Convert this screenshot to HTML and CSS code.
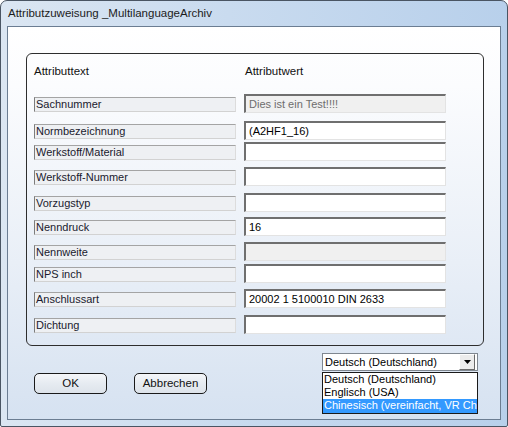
FILE: index.html
```html
<!DOCTYPE html>
<html>
<head>
<meta charset="utf-8">
<link rel="stylesheet" href="styles.css">
</head>
<body>
<div class="window">
  <div class="titlebar">Attributzuweisung _MultilanguageArchiv</div>
  <div class="client">
    <div class="group">
      <div class="head"><span>Attributtext</span><span class="head-val">Attributwert</span></div>
      <div class="grid">
        <div class="lbl">Sachnummer</div><div class="inp disabled">Dies ist ein Test!!!!</div>
        <div class="lbl">Normbezeichnung</div><div class="inp">(A2HF1_16)</div>
        <div class="lbl">Werkstoff/Material</div><div class="inp"></div>
        <div class="lbl">Werkstoff-Nummer</div><div class="inp"></div>
        <div class="lbl">Vorzugstyp</div><div class="inp"></div>
        <div class="lbl">Nenndruck</div><div class="inp">16</div>
        <div class="lbl">Nennweite</div><div class="inp disabled"></div>
        <div class="lbl">NPS inch</div><div class="inp"></div>
        <div class="lbl">Anschlussart</div><div class="inp">20002 1 5100010 DIN 2633</div>
        <div class="lbl">Dichtung</div><div class="inp"></div>
      </div>
    </div>
    <div class="footer">
      <div class="buttons">
        <div class="btn">OK</div>
        <div class="btn">Abbrechen</div>
      </div>
      <div class="combo">
        <div class="combo-box">
          <span class="combo-text">Deutsch (Deutschland)</span>
          <span class="combo-btn"><svg width="7" height="4" viewBox="0 0 7 4"><path d="M0 0H7L3.5 4Z" fill="#000"/></svg></span>
        </div>
        <div class="list">
          <div class="item">Deutsch (Deutschland)</div>
          <div class="item">Englisch (USA)</div>
          <div class="item sel">Chinesisch (vereinfacht, VR China)</div>
        </div>
      </div>
    </div>
  </div>
</div>
</body>
</html>
```
FILE: styles.css
```css
html, body {
  margin: 0;
  padding: 0;
  background: #ffffff;
}
body {
  width: 508px;
  height: 427px;
  overflow: hidden;
  font-family: "Liberation Sans", Arial, sans-serif;
}
.window {
  box-sizing: border-box;
  width: 508px;
  height: 427px;
  border: 1px solid #4a5563;
  border-radius: 7px 7px 2px 2px;
  padding: 0 6px 6px 6px;
  background: linear-gradient(to right, #dbe6f2 0%, #c9dbef 45%, #b8d0eb 100%);
  display: flex;
  flex-direction: column;
}
.titlebar {
  height: 25px;
  line-height: 25px;
  padding-left: 1px;
  font-size: 11.5px;
  color: #1c1c1c;
  white-space: nowrap;
}
.client {
  box-sizing: border-box;
  height: 394px;
  border: 1px solid #6b7d92;
  background: linear-gradient(to bottom, #ffffff 0%, #fbfcfe 15%, #e9eff7 60%, #d6e2f1 100%);
  display: flex;
  flex-direction: column;
}
.group {
  margin: 26px 16px 0 18px;
  height: 293px;
  box-sizing: border-box;
  border: 1px solid #2e2e2e;
  border-radius: 6px;
  padding: 10px 0 0 7px;
}
.head {
  display: grid;
  grid-template-columns: 202px 202px;
  column-gap: 8px;
  height: 14px;
  line-height: 14px;
  font-size: 11.5px;
  color: #111;
}
.head-val {
  padding-left: 1px;
}
.grid {
  margin-top: 16px;
  display: grid;
  grid-template-columns: 202px 202px;
  grid-template-rows: 27px 21px 25px 26px 24px 25px 22px 25px 26px 19px;
  column-gap: 8px;
  align-items: start;
  font-size: 11px;
}
.lbl {
  box-sizing: border-box;
  height: 15px;
  margin-top: 3px;
  line-height: 13px;
  padding-left: 1px;
  border-top: 1px solid #a4a4a4;
  border-left: 1px solid #7c7c7c;
  border-right: 1px solid #dcdcdc;
  border-bottom: 1px solid #d2d2d2;
  background: #eef0f3;
  color: #1a1a2e;
  white-space: nowrap;
  overflow: hidden;
}
.inp {
  box-sizing: border-box;
  height: 19px;
  line-height: 16px;
  padding-left: 3px;
  border-top: 2px solid #6f6f6f;
  border-left: 2px solid #6f6f6f;
  border-right: 1px solid #e3e3e3;
  border-bottom: 1px solid #e3e3e3;
  background: #ffffff;
  color: #000;
  white-space: nowrap;
  overflow: hidden;
}
.inp.disabled {
  background: #f0f0f0;
  color: #6d6d6d;
}
.footer {
  display: flex;
  justify-content: space-between;
  align-items: flex-start;
  margin: 7px 22px 0 26px;
}
.buttons {
  display: flex;
  gap: 27px;
  padding-top: 20px;
}
.btn {
  box-sizing: border-box;
  width: 73px;
  height: 21px;
  border: 1px solid #1a1a1a;
  border-radius: 5px;
  background: linear-gradient(to bottom, #f4f6f9 0%, #e6ebf1 50%, #dde3ea 100%);
  font-size: 11.5px;
  line-height: 19px;
  text-align: center;
  color: #111;
}
.combo {
  position: relative;
  width: 156px;
}
.combo-box {
  box-sizing: border-box;
  height: 18px;
  border: 1px solid #7f8790;
  background: #ffffff;
  display: flex;
  align-items: center;
  font-size: 11px;
}
.combo-text {
  flex: 1;
  padding-left: 2px;
  line-height: 16px;
  white-space: nowrap;
  overflow: hidden;
}
.combo-btn {
  box-sizing: border-box;
  width: 16px;
  height: 16px;
  margin-right: 2px;
  border-top: 1px solid #ffffff;
  border-left: 1px solid #ffffff;
  border-right: 1px solid #6a6a6a;
  border-bottom: 1px solid #6a6a6a;
  background: #ececec;
  display: flex;
  align-items: center;
  justify-content: center;
}
.list {
  position: absolute;
  left: 0;
  top: 19px;
  box-sizing: border-box;
  width: 156px;
  height: 42px;
  border: 1px solid #1a1a1a;
  background: #ffffff;
  font-size: 11px;
  overflow: hidden;
}
.item {
  height: 13px;
  line-height: 13px;
  padding-left: 1px;
  white-space: nowrap;
  color: #000;
}
.item.sel {
  background: #3399ff;
  color: #ffffff;
  height: 14px;
}
```
